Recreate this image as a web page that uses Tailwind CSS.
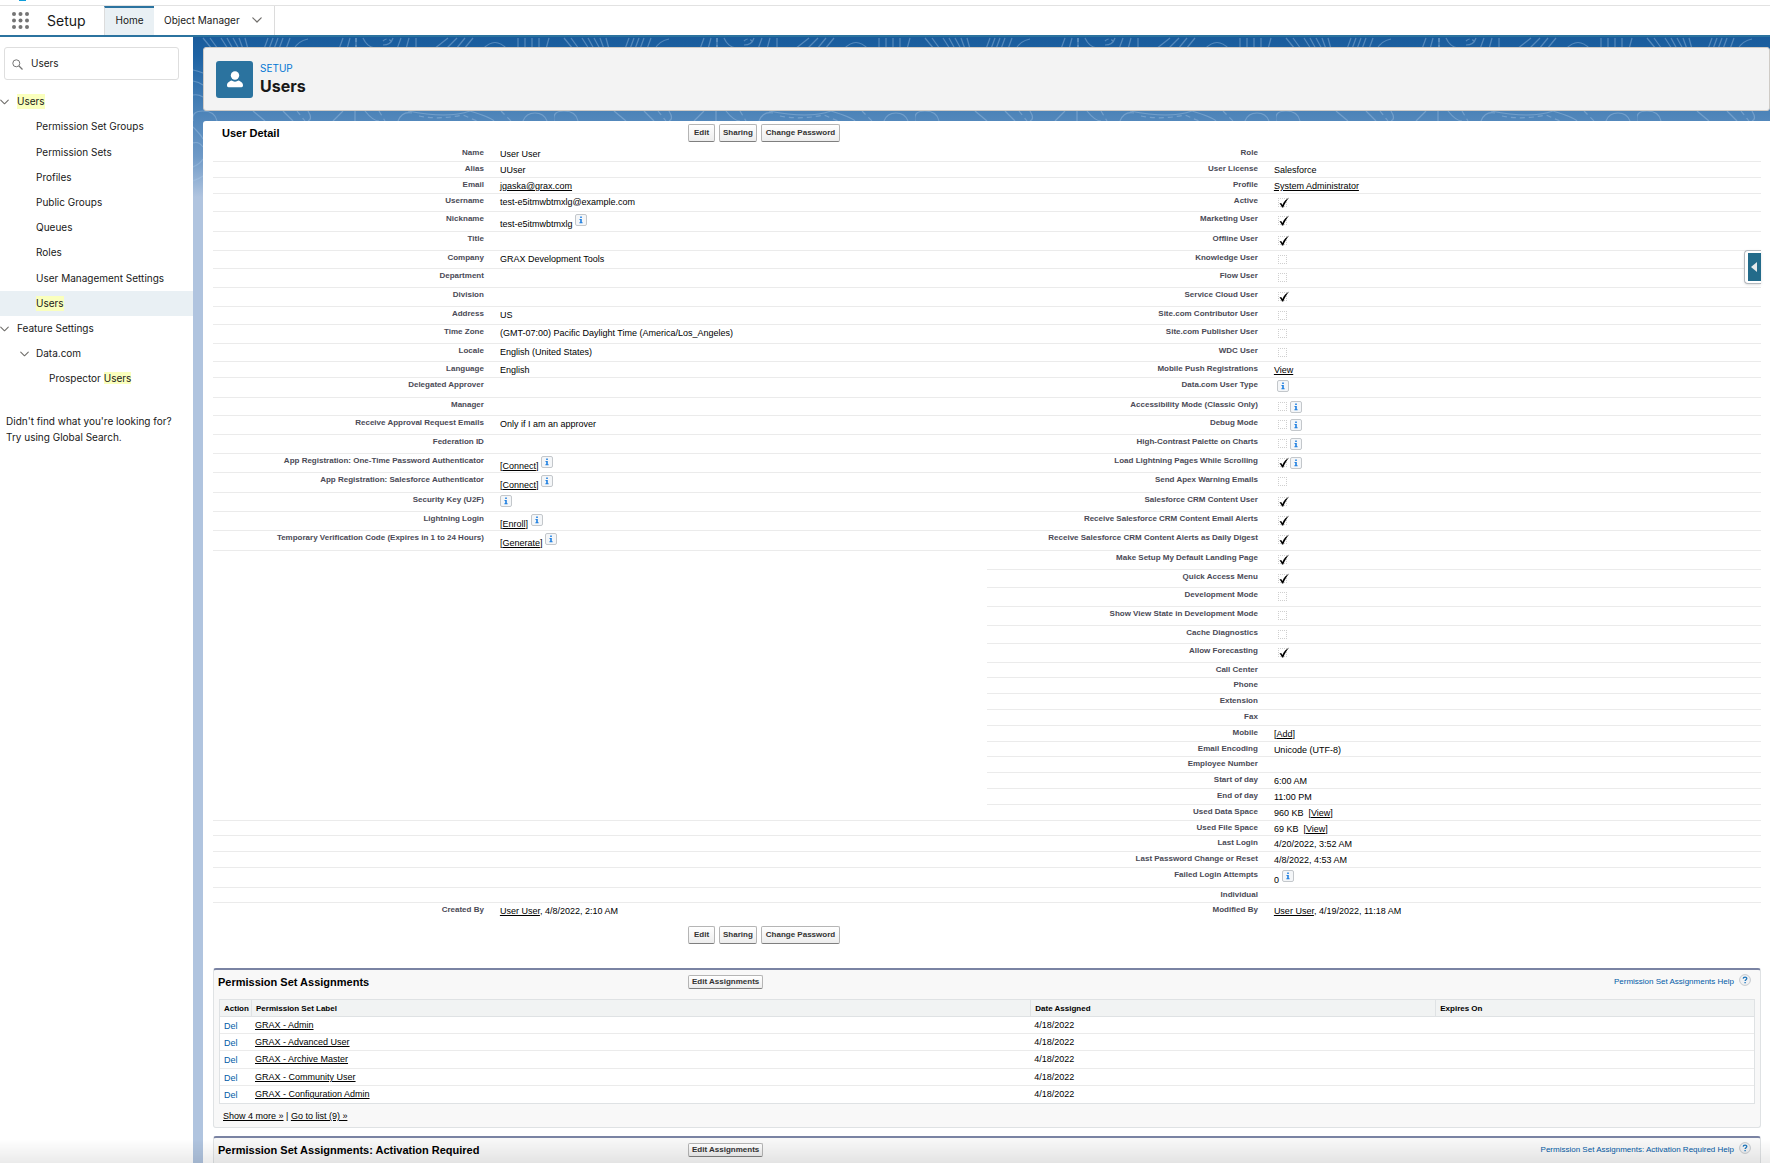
<!DOCTYPE html>
<html lang="en">
<head>
<meta charset="utf-8">
<meta name="viewport" content="width=device-width, initial-scale=1">
<title>Users | Salesforce Setup</title>
<script src="https://cdn.jsdelivr.net/npm/@tailwindcss/browser@4"></script>
</head>
<body class="flex h-screen flex-col overflow-hidden bg-white font-['Inter',sans-serif] text-[10px] text-[#181818]">

<!-- Shared icons -->
<svg class="hidden" aria-hidden="true">
  <symbol id="chevron" viewBox="0 0 10 6"><path d="M.8.8 5 5 9.2.8" fill="none" stroke="currentColor" stroke-width="1.2" stroke-linecap="round" stroke-linejoin="round"/></symbol>
  <symbol id="tick" viewBox="0 0 12 12"><path d="M1.500 6.400 3.200 5.900 4.400 8C5.900 4.800 8 2.200 11.200.6 8.600 3.600 6.800 6.800 5.200 10.500H4C3.400 8.800 2.600 7.400 1.500 6.400Z" fill="#000"/></symbol>
  <symbol id="info" viewBox="0 0 12 12"><rect x=".5" y=".5" width="11" height="11" rx="1.500" fill="#f4f6f8" stroke="#c3c7cb"/><path d="M5.200 2.500h1.600v1.400H5.200zM4.500 5h2.300v3.300h.8v.9H4.400v-.9h.8V5.900h-.7z" fill="#1f7fe0"/></symbol>
  <symbol id="help" viewBox="0 0 12 12"><circle cx="6" cy="6" r="5.400" fill="#f0f1f3" stroke="#c5c9cd"/><path d="M4.200 4.600C4.300 2.500 7.900 2.500 7.800 4.600 7.800 5.700 6.100 5.800 6.100 7.100M6.100 8.100v1.200" fill="none" stroke="#1b75bc" stroke-width="1.300"/></symbol>
</svg>

<!-- Global header -->
<header class="shrink-0 border-b-2 border-[#2b739f]">
  <div class="h-[6px] border-b border-[#e2e2e2] pl-[19px]">
    <div class="h-[1px] w-[7px] bg-[#0d9dda]"></div>
  </div>
  <nav class="flex h-[29px] items-stretch" aria-label="Setup">
    <button type="button" aria-label="App Launcher" class="ml-3 w-[17px]">
      <svg viewBox="0 0 17 17" class="size-[17px] fill-[#747474]"><circle cx="2" cy="2" r="2"/><circle cx="8.500" cy="2" r="2"/><circle cx="15" cy="2" r="2"/><circle cx="2" cy="8.500" r="2"/><circle cx="8.500" cy="8.500" r="2"/><circle cx="15" cy="8.500" r="2"/><circle cx="2" cy="15" r="2"/><circle cx="8.500" cy="15" r="2"/><circle cx="15" cy="15" r="2"/></svg>
    </button>
    <span class="flex w-[75px] items-center pl-[18px] text-[14px]">Setup</span>
    <a href="#" class="flex w-[50px] items-center justify-center border-l border-t-2 border-l-[#dcdcdc] border-t-[#2b739f] bg-[#e9f0f4] pb-[2px]">Home</a>
    <a href="#" class="flex items-center gap-3 border-r border-[#dcdcdc] pl-[10px] pr-3 pb-px">Object Manager
      <svg class="h-[6px] w-[10px] text-[#706e6b]"><use href="#chevron"/></svg></a>
  </nav>
</header>

<div class="flex min-h-0 flex-1">

  <!-- Setup tree -->
  <aside class="w-[193px] shrink-0 bg-white pt-[10px]">
    <label class="ml-1 mr-[14px] flex h-[33px] items-center gap-2 rounded-[3px] border border-[#dedede] px-[7px]">
      <svg viewBox="0 0 11 11" class="mt-px size-[11px] shrink-0 fill-none stroke-[#747474]"><circle cx="4.300" cy="4.300" r="3.500"/><path d="m7 7 3.500 3.500" stroke-width="1.300"/></svg>
      <input type="text" value="Users" aria-label="Quick Find" class="w-full bg-transparent outline-none">
    </label>
    <ul class="mt-[9px] [&_a]:flex [&_a]:h-[25px] [&_a]:items-center [&_mark]:bg-[#faffbd] [&_mark]:text-inherit">
      <li><a href="#" class="gap-[8px]"><svg class="h-[6px] w-[9px] text-[#706e6b]"><use href="#chevron"/></svg><mark>Users</mark></a>
        <ul class="[&_a]:pl-[36px]">
          <li class="pb-px"><a href="#">Permission Set Groups</a></li>
          <li><a href="#">Permission Sets</a></li>
          <li><a href="#">Profiles</a></li>
          <li><a href="#">Public Groups</a></li>
          <li><a href="#">Queues</a></li>
          <li class="pb-px"><a href="#">Roles</a></li>
          <li><a href="#">User Management Settings</a></li>
          <li class="bg-[#e9f0f4]"><a href="#" aria-current="page"><mark>Users</mark></a></li>
        </ul>
      </li>
      <li><a href="#" class="gap-[8px]"><svg class="h-[6px] w-[9px] text-[#706e6b]"><use href="#chevron"/></svg>Feature Settings</a>
        <ul>
          <li><a href="#" class="gap-[7px] pl-5"><svg class="h-[6px] w-[9px] text-[#706e6b]"><use href="#chevron"/></svg>Data.com</a>
            <ul><li><a href="#" class="pl-[49px]"><span>Prospector <mark>Users</mark></span></a></li></ul>
          </li>
        </ul>
      </li>
    </ul>
    <p class="mt-[22px] pl-[6px] leading-4">Didn't find what you're looking for?<br>Try using Global Search.</p>
  </aside>

  <!-- Workspace -->
  <main class="relative flex min-w-0 flex-1 flex-col bg-[#b0c4df] pl-[10px] pt-[10px]">
    <svg class="absolute inset-x-0 top-0 h-[160px] w-full" aria-hidden="true">
      <defs>
        <linearGradient id="sky" x2="0" y2="1"><stop offset="0" stop-color="#1a5c9c"/><stop offset=".12" stop-color="#1d62a3"/><stop offset=".5" stop-color="#5086ba"/><stop offset=".75" stop-color="#6f9ac7"/><stop offset="1" stop-color="#b0c4df"/></linearGradient>
        <pattern id="contours" width="361" height="160" patternUnits="userSpaceOnUse">
          <g fill="none" stroke="#a9c8e6" stroke-opacity=".4" stroke-width="1.200">
            <path d="m10 1 9 11M17 1l8 11M28 1l7 11M34 1l6 11M40 1l6 11M46 1l4 11M52 1l3 11M75 1l-4 11M80 1l-4 11M85 1l-4 11M90 1l-4 11M97 1l-4 11"/>
            <path d="M115 2q-10 2-14 10M150 1l-4 11M157 1l-3 11M163 1v11M170 1q4 9 12 10M190 8q8 0 10-7M208 1l-4 11M216 1l-3 11M223 1v11M255 1l-14 11M264 1l-11 11M272 1l-9 11M280 1l-9 11M290 12q12-13 24 0M325 1v11M332 1v11M339 1v11M346 1v11M356 1l-3 11"/>
            <path d="M163 1v11M190 4q4-4 8 0" stroke-dasharray="4 3"/>
            <path d="M0 84q-2-10 10-10t14 10M60 74l12 10M90 74l10 10M115 74q5 8 0 10M150 74l-10 10M162 74v10M172 74q8 10 14 10M205 84q4-10 14-8M215 74q40 8 62 0 20 6 24 10M330 84q3-8 12-8t12 8"/>
            <path d="M104 74l8 10M186 74l6 10M226 79q20 4 44-1l14 6M308 74l10 10" stroke-dasharray="5 4"/>
            <path d="M0 33q5 1 10 3M0 44q6 1 10 4M0 58q5-1 10 2M0 90q8 8 10 12M0 106q6-2 10 4M0 130q7-3 10-8M0 144q6-2 10-5"/>
          </g>
        </pattern>
      </defs>
      <rect width="100%" height="100%" fill="url(#sky)"/><rect width="100%" height="100%" fill="url(#contours)"/>
    </svg>

    <div class="relative flex h-16 shrink-0 items-center gap-[7px] rounded-[3px] border border-[#cfcbc6] bg-[#f3f3f3] pl-3">
      <span class="flex size-[37px] items-center justify-center rounded-[3px] bg-[#2b739f]">
        <svg viewBox="0 0 16 17" class="h-[17px] w-4 fill-white"><circle cx="8" cy="4.500" r="4.200"/><path d="M0 14.500C0 11.500 2.500 10.500 4.500 9.600 6.500 11 9.500 11 11.500 9.600 13.500 10.500 16 11.500 16 14.500 16 15.600 15.300 16.200 14.500 16.200H1.500C.7 16.200 0 15.600 0 14.500Z"/></svg>
      </span>
      <div>
        <p class="leading-[14px] text-[#0176d3]">SETUP</p>
        <h1 class="text-[16px] leading-[22px] font-bold">Users</h1>
      </div>
    </div>

    <section class="relative mt-[10px] min-h-0 flex-1 overflow-hidden rounded-tl-[3px] bg-white pl-[10px] pr-[9px] font-['Liberation_Sans',Arial,sans-serif] text-[9px] leading-[12px] text-black [&_td_a]:underline">

      <div class="grid h-[25px] grid-cols-[475px_1fr] pt-[3px]">
        <h2 class="pl-[9px] text-[11px] leading-[18px] font-bold">User Detail</h2>
        <div class="flex gap-1 text-[8px] leading-[12px] font-bold text-[#333] [&_button]:h-[18px] [&_button]:rounded-[2px] [&_button]:border [&_button]:border-[#b5b5b5] [&_button]:border-b-[#7f7f7f] [&_button]:bg-linear-to-b [&_button]:from-white [&_button]:to-[#ededed]">
          <button type="button" class="w-[27px]">Edit</button>
          <button type="button" class="px-[3px]">Sharing</button>
          <button type="button" class="px-1">Change Password</button>
        </div>
      </div>

      <table class="w-full table-fixed border-separate border-spacing-0 [&_td]:border-b [&_td]:border-[#ebebeb] [&_td]:pt-[2px] [&_td]:pl-4 [&_td]:align-top [&_th]:border-b [&_th]:border-[#ebebeb] [&_th]:pt-[2px] [&_th]:text-right [&_th]:align-top [&_th]:text-[8px] [&_th]:leading-[10px] [&_th]:font-bold [&_th]:text-[#4a4a56] [&_td>div]:flex [&_td>div]:gap-[3px] [&_span]:mt-1 [&_svg]:size-3 [&_i]:relative [&_i]:ml-1 [&_i]:mt-[2px] [&_i]:block [&_i]:size-[9px] [&_i>svg]:absolute [&_i>svg]:-top-px [&_i>svg]:left-0 [&_input]:block [&_input]:size-[9px] [&_input]:appearance-none [&_input]:border [&_input]:border-dotted [&_input]:border-[#cfcfcf]">
        <colgroup><col class="w-[17.500%]"><col class="w-[32.500%]"><col class="w-[17.500%]"><col class="w-[32.500%]"></colgroup>
        <tbody>
          <tr class="h-[16px]"><th>Name</th><td>User User</td><th>Role</th><td></td></tr>
          <tr class="h-[16px]"><th>Alias</th><td>UUser</td><th>User License</th><td>Salesforce</td></tr>
          <tr class="h-[16px]"><th>Email</th><td><a href="#">jgaska@grax.com</a></td><th>Profile</th><td><a href="#">System Administrator</a></td></tr>
          <tr class="h-[18px]"><th>Username</th><td>test-e5itmwbtmxlg@example.com</td><th><label for="c1">Active</label></th><td><div><i><input type="checkbox" id="c1" checked disabled><svg><use href="#tick"/></svg></i></div></td></tr>
          <tr class="h-[20px]"><th>Nickname</th><td><div><span>test-e5itmwbtmxlg</span><svg><use href="#info"/></svg></div></td><th><label for="c2">Marketing User</label></th><td><div><i><input type="checkbox" id="c2" checked disabled><svg><use href="#tick"/></svg></i></div></td></tr>
          <tr class="h-[19px]"><th>Title</th><td></td><th><label for="c3">Offline User</label></th><td><div><i><input type="checkbox" id="c3" checked disabled><svg><use href="#tick"/></svg></i></div></td></tr>
          <tr class="h-[18px]"><th>Company</th><td>GRAX Development Tools</td><th><label for="c4">Knowledge User</label></th><td><div><i><input type="checkbox" id="c4" disabled></i></div></td></tr>
          <tr class="h-[19px]"><th>Department</th><td></td><th><label for="c5">Flow User</label></th><td><div><i><input type="checkbox" id="c5" disabled></i></div></td></tr>
          <tr class="h-[19px]"><th>Division</th><td></td><th><label for="c6">Service Cloud User</label></th><td><div><i><input type="checkbox" id="c6" checked disabled><svg><use href="#tick"/></svg></i></div></td></tr>
          <tr class="h-[18px]"><th>Address</th><td>US</td><th><label for="c7">Site.com Contributor User</label></th><td><div><i><input type="checkbox" id="c7" disabled></i></div></td></tr>
          <tr class="h-[19px]"><th>Time Zone</th><td>(GMT-07:00) Pacific Daylight Time (America/Los_Angeles)</td><th><label for="c8">Site.com Publisher User</label></th><td><div><i><input type="checkbox" id="c8" disabled></i></div></td></tr>
          <tr class="h-[18px]"><th>Locale</th><td>English (United States)</td><th><label for="c9">WDC User</label></th><td><div><i><input type="checkbox" id="c9" disabled></i></div></td></tr>
          <tr class="h-[16px]"><th>Language</th><td>English</td><th>Mobile Push Registrations</th><td><a href="#">View</a></td></tr>
          <tr class="h-[20px]"><th>Delegated Approver</th><td></td><th>Data.com User Type</th><td><div class="pl-[3px]"><svg><use href="#info"/></svg></div></td></tr>
          <tr class="h-[18px]"><th>Manager</th><td></td><th><label for="c10">Accessibility Mode (Classic Only)</label></th><td><div><i><input type="checkbox" id="c10" disabled></i><svg class="mt-px"><use href="#info"/></svg></div></td></tr>
          <tr class="h-[19px]"><th>Receive Approval Request Emails</th><td>Only if I am an approver</td><th><label for="c11">Debug Mode</label></th><td><div><i><input type="checkbox" id="c11" disabled></i><svg class="mt-px"><use href="#info"/></svg></div></td></tr>
          <tr class="h-[19px]"><th>Federation ID</th><td></td><th><label for="c12">High-Contrast Palette on Charts</label></th><td><div><i><input type="checkbox" id="c12" disabled></i><svg class="mt-px"><use href="#info"/></svg></div></td></tr>
          <tr class="h-[19px]"><th>App Registration: One-Time Password Authenticator</th><td><div><span>[<a href="#">Connect</a>]</span><svg><use href="#info"/></svg></div></td><th><label for="c13">Load Lightning Pages While Scrolling</label></th><td><div><i><input type="checkbox" id="c13" checked disabled><svg><use href="#tick"/></svg></i><svg class="mt-px"><use href="#info"/></svg></div></td></tr>
          <tr class="h-[20px]"><th>App Registration: Salesforce Authenticator</th><td><div><span>[<a href="#">Connect</a>]</span><svg><use href="#info"/></svg></div></td><th><label for="c14">Send Apex Warning Emails</label></th><td><div><i><input type="checkbox" id="c14" disabled></i></div></td></tr>
          <tr class="h-[19px]"><th>Security Key (U2F)</th><td><div><svg><use href="#info"/></svg></div></td><th><label for="c15">Salesforce CRM Content User</label></th><td><div><i><input type="checkbox" id="c15" checked disabled><svg><use href="#tick"/></svg></i></div></td></tr>
          <tr class="h-[19px]"><th>Lightning Login</th><td><div><span>[<a href="#">Enroll</a>]</span><svg><use href="#info"/></svg></div></td><th><label for="c16">Receive Salesforce CRM Content Email Alerts</label></th><td><div><i><input type="checkbox" id="c16" checked disabled><svg><use href="#tick"/></svg></i></div></td></tr>
          <tr class="h-[20px]"><th>Temporary Verification Code (Expires in 1 to 24 Hours)</th><td><div><span>[<a href="#">Generate</a>]</span><svg><use href="#info"/></svg></div></td><th><label for="c17">Receive Salesforce CRM Content Alerts as Daily Digest</label></th><td><div><i><input type="checkbox" id="c17" checked disabled><svg><use href="#tick"/></svg></i></div></td></tr>
          <tr class="h-[19px]"><td colspan="2" rowspan="15" class="border-b-0!"></td><th><label for="c18">Make Setup My Default Landing Page</label></th><td><div><i><input type="checkbox" id="c18" checked disabled><svg><use href="#tick"/></svg></i></div></td></tr>
          <tr class="h-[18px]"><th><label for="c19">Quick Access Menu</label></th><td><div><i><input type="checkbox" id="c19" checked disabled><svg><use href="#tick"/></svg></i></div></td></tr>
          <tr class="h-[19px]"><th><label for="c20">Development Mode</label></th><td><div><i><input type="checkbox" id="c20" disabled></i></div></td></tr>
          <tr class="h-[19px]"><th><label for="c21">Show View State in Development Mode</label></th><td><div><i><input type="checkbox" id="c21" disabled></i></div></td></tr>
          <tr class="h-[18px]"><th><label for="c22">Cache Diagnostics</label></th><td><div><i><input type="checkbox" id="c22" disabled></i></div></td></tr>
          <tr class="h-[19px]"><th><label for="c23">Allow Forecasting</label></th><td><div><i><input type="checkbox" id="c23" checked disabled><svg><use href="#tick"/></svg></i></div></td></tr>
          <tr class="h-[15px]"><th>Call Center</th><td></td></tr>
          <tr class="h-[16px]"><th>Phone</th><td></td></tr>
          <tr class="h-[16px]"><th>Extension</th><td></td></tr>
          <tr class="h-[16px]"><th>Fax</th><td></td></tr>
          <tr class="h-[16px]"><th>Mobile</th><td>[<a href="#">Add</a>]</td></tr>
          <tr class="h-[15px]"><th>Email Encoding</th><td>Unicode (UTF-8)</td></tr>
          <tr class="h-[16px]"><th>Employee Number</th><td></td></tr>
          <tr class="h-[16px]"><th>Start of day</th><td>6:00 AM</td></tr>
          <tr class="h-[16px]"><th>End of day</th><td>11:00 PM</td></tr>
          <tr class="h-[16px]"><td colspan="2"></td><th>Used Data Space</th><td>960 KB&nbsp; [<a href="#">View</a>]</td></tr>
          <tr class="h-[15px]"><td colspan="2"></td><th>Used File Space</th><td>69 KB&nbsp; [<a href="#">View</a>]</td></tr>
          <tr class="h-[16px]"><td colspan="2"></td><th>Last Login</th><td>4/20/2022, 3:52 AM</td></tr>
          <tr class="h-[16px]"><td colspan="2"></td><th>Last Password Change or Reset</th><td>4/8/2022, 4:53 AM</td></tr>
          <tr class="h-[20px]"><td colspan="2"></td><th>Failed Login Attempts</th><td><div><span>0</span><svg><use href="#info"/></svg></div></td></tr>
          <tr class="h-[15px]"><td colspan="2"></td><th>Individual</th><td></td></tr>
          <tr class="h-[16px] [&>*]:border-b-0!"><th>Created By</th><td><a href="#">User User</a>, 4/8/2022, 2:10 AM</td><th>Modified By</th><td><a href="#">User User</a>, 4/19/2022, 11:18 AM</td></tr>
        </tbody>
      </table>

      <div class="mt-[7px] ml-[475px] flex gap-1 text-[8px] leading-[12px] font-bold text-[#333] [&_button]:h-[18px] [&_button]:rounded-[2px] [&_button]:border [&_button]:border-[#b5b5b5] [&_button]:border-b-[#7f7f7f] [&_button]:bg-linear-to-b [&_button]:from-white [&_button]:to-[#ededed]">
        <button type="button" class="w-[27px]">Edit</button>
        <button type="button" class="px-[3px]">Sharing</button>
        <button type="button" class="px-1">Change Password</button>
      </div>

      <!-- Permission set assignments -->
      <section class="mt-6 rounded-[3px] border border-t-2 border-[#dfe2e4] border-t-[#7a83a3] bg-[#f8f8f8] px-[5px]">
        <div class="grid h-[29px] grid-cols-[469px_1fr_auto] pt-1">
          <h3 class="-ml-px text-[11px] leading-4 font-bold">Permission Set Assignments</h3>
          <div><button type="button" class="mt-px h-[14px] rounded-[2px] border border-[#b5b5b5] border-b-[#7f7f7f] bg-linear-to-b from-white to-[#ededed] px-[3px] text-[8px] leading-[10px] font-bold text-[#333]">Edit Assignments</button></div>
          <a href="#" class="mr-1 flex gap-[5px] text-[8px] leading-[15px] text-[#015ba7]">Permission Set Assignments Help<svg class="size-3"><use href="#help"/></svg></a>
        </div>
        <table class="w-full table-fixed border-separate border-spacing-0 border border-[#dfe2e4] bg-white text-left [&_td]:border-b [&_td]:border-[#ebebeb] [&_td]:pl-1 [&_td]:align-top [&_td]:pt-[2px] [&_th]:border-b [&_th]:border-[#dfe2e4] [&_th]:bg-[#f1f3f3] [&_th]:pl-1 [&_th]:pt-px [&_th]:text-[8px] [&_th]:font-bold">
          <colgroup><col class="w-[31px]"><col class="w-[50.800%]"><col class="w-[26.400%]"><col></colgroup>
          <thead><tr class="h-[17px] [&>th+th]:border-l [&>th+th]:border-[#dfe2e4]"><th>Action</th><th>Permission Set Label</th><th>Date Assigned</th><th>Expires On</th></tr></thead>
          <tbody class="[&_td:first-child]:pt-[3px] [&_td:first-child_a]:text-[#015ba7] [&_td:first-child_a]:no-underline [&>tr:last-child>td]:border-b-0">
            <tr class="h-[17px]"><td><a href="#">Del</a></td><td><a href="#">GRAX - Admin</a></td><td>4/18/2022</td><td></td></tr>
            <tr class="h-[17px]"><td><a href="#">Del</a></td><td><a href="#">GRAX - Advanced User</a></td><td>4/18/2022</td><td></td></tr>
            <tr class="h-[18px]"><td><a href="#">Del</a></td><td><a href="#">GRAX - Archive Master</a></td><td>4/18/2022</td><td></td></tr>
            <tr class="h-[17px]"><td><a href="#">Del</a></td><td><a href="#">GRAX - Community User</a></td><td>4/18/2022</td><td></td></tr>
            <tr class="h-[17px]"><td><a href="#">Del</a></td><td><a href="#">GRAX - Configuration Admin</a></td><td>4/18/2022</td><td></td></tr>
          </tbody>
        </table>
        <p class="pt-[6px] pb-[5px] pl-1"><a href="#" class="underline">Show 4 more »</a> | <a href="#" class="underline">Go to list (9) »</a></p>
      </section>

      <section class="mt-2 h-24 rounded-[3px] border border-t-2 border-[#dfe2e4] border-t-[#7a83a3] bg-[#f8f8f8] px-[5px]">
        <div class="grid h-[29px] grid-cols-[469px_1fr_auto] pt-1">
          <h3 class="-ml-px text-[11px] leading-4 font-bold">Permission Set Assignments: Activation Required</h3>
          <div><button type="button" class="mt-px h-[14px] rounded-[2px] border border-[#b5b5b5] border-b-[#7f7f7f] bg-linear-to-b from-white to-[#ededed] px-[3px] text-[8px] leading-[10px] font-bold text-[#333]">Edit Assignments</button></div>
          <a href="#" class="mr-1 flex gap-[5px] text-[8px] leading-[15px] text-[#015ba7]">Permission Set Assignments: Activation Required Help<svg class="size-3"><use href="#help"/></svg></a>
        </div>
      </section>

      <!-- Help panel handle -->
      <button type="button" aria-label="Open help panel" class="absolute top-[129px] right-[9px] flex h-[34px] w-[17px] items-center rounded-l-[4px] border border-r-0 border-[#b4b9be] bg-white pl-[3px] shadow-sm">
        <span class="flex h-7 w-full items-center bg-[#236b8a] pl-[3px]"><svg viewBox="0 0 6 10" class="h-[10px] w-[6px] fill-[#e4e8ea]"><path d="M6 0v10L0 5z"/></svg></span>
      </button>
    </section>
  </main>
</div>

<div class="pointer-events-none fixed inset-x-0 bottom-0 h-6 bg-linear-to-b from-transparent to-black/8"></div>
</body>
</html>
